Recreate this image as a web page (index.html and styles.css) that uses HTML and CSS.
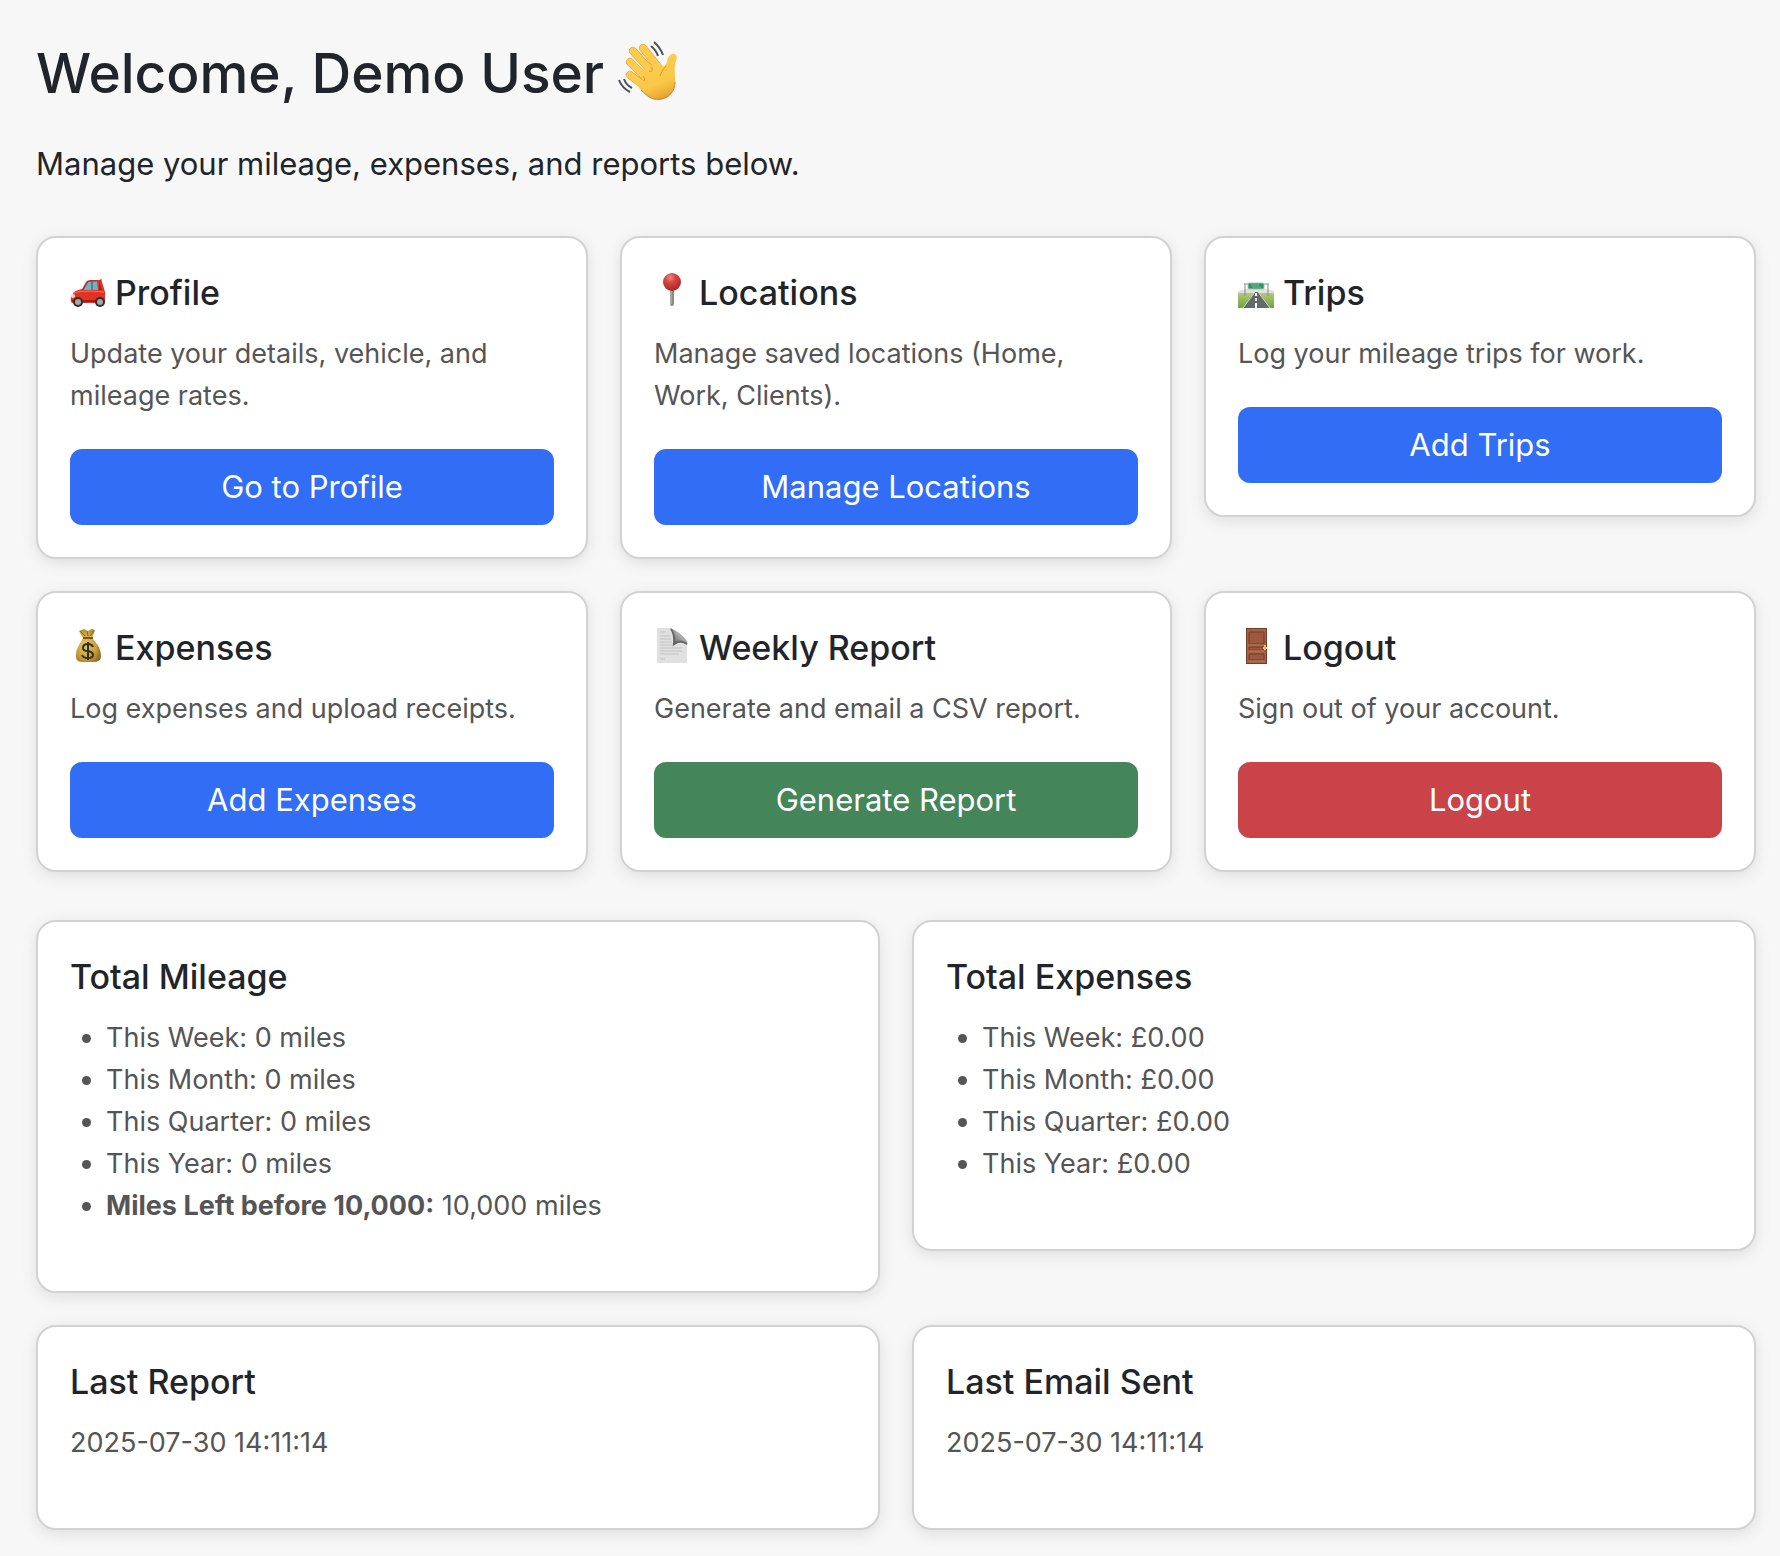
FILE: index.html
```html
<!DOCTYPE html>
<html lang="en">
<head>
  <meta charset="UTF-8">
  <meta name="viewport" content="width=device-width, initial-scale=1.0">
  <title>Dashboard</title>
  <link rel="stylesheet" href="styles.css">
</head>
<body>
  <main class="container">
    <h1>Welcome, Demo User
      <svg class="wave" viewBox="22 20 60 62" aria-hidden="true">
        <defs>
          <linearGradient id="skin" gradientUnits="userSpaceOnUse" x1="40" y1="25" x2="62" y2="80">
            <stop offset="0" stop-color="#ffd35a"/>
            <stop offset=".75" stop-color="#fac747"/>
            <stop offset="1" stop-color="#e6a632"/>
          </linearGradient>
        </defs>
        <g fill="none" stroke-linecap="round">
          <path d="M47 28L63 48M37 31L58 54M34 42L54 62M34 55L54 70" stroke="#dfa03a" stroke-width="8"/>
          <path d="M47 28L63 48M37 31L58 54M34 42L54 62M34 55L54 70" stroke="#fecb4d" stroke-width="7"/>
        </g>
        <path d="M48 48L53 52C56 53 57 49 55 46L61 42L66 46Q70 47 71 41C72 36 75 33 79 34Q82 36 80 41C78 47 79 51 79 58C80 70 74 79 63 80C55 80 50 75 45 70L38 62L47 61C49 59 46 56 44 54Z" fill="url(#skin)"/>
        <path d="M53 51Q57 53 56 47M48 61Q50 59 47 56M70 46Q66 49 64 56" fill="none" stroke="#d9952b" stroke-width="1"/>
        <path d="M45 70C52 77 57 80 63 79C73 79 79 71 79 62" fill="none" stroke="#cf8520" stroke-width="1"/>
        <path d="M55 26Q60 30 62 36M58 22Q64 27 67 35M28 59Q30 65 36 68M23 60Q26 68 34 72" fill="none" stroke="#4d5259" stroke-width="2"/>
      </svg>
    </h1>
    <p class="intro">Manage your mileage, expenses, and reports below.</p>

    <section class="grid actions">
      <div class="card">
        <h2>
          <svg class="icon" viewBox="0 0 36 36" aria-hidden="true">
            <path d="M2 22L5 18L12 16L16 9Q17 7 21 7H31L32 9L35 19V30H3Q0 30 1 24Z" fill="#df3326"/>
            <path d="M13 17L17 10Q18 8 21 8H27L28 17Z" fill="#68b4c8"/>
            <path d="M13 17L17 10Q18 8 21 8H27M22 8V17" fill="none" stroke="#8b3230" stroke-width="1"/>
            <path d="M29 8L32 17H29Z" fill="#a52322"/>
            <path d="M31 8V6" stroke="#8b3230"/>
            <path d="M3 20Q12 17 34 19" fill="none" stroke="#ff7668" stroke-width="1"/>
            <path d="M2 28H35" stroke="#97201b" stroke-width="2"/>
            <circle cx="3" cy="23" r="2" fill="#f9d8c3"/>
            <circle cx="8" cy="29" r="5" fill="#332d2c"/>
            <circle cx="30" cy="29" r="5" fill="#332d2c"/>
            <circle cx="8" cy="29" r="3" fill="#aaa5a3"/>
            <circle cx="30" cy="29" r="3" fill="#aaa5a3"/>
          </svg>
          Profile
        </h2>
        <p>Update your details, vehicle, and mileage rates.</p>
        <a href="#profile" class="btn btn-primary">Go to Profile</a>
      </div>

      <div class="card">
        <h2>
          <svg class="icon" viewBox="0 0 36 36" aria-hidden="true">
            <defs>
              <radialGradient id="pin" cx=".4" cy=".25" r=".8">
                <stop offset="0" stop-color="#f48b7d"/>
                <stop offset=".35" stop-color="#d84541"/>
                <stop offset="1" stop-color="#9f2426"/>
              </radialGradient>
            </defs>
            <path d="M18 15V31" stroke="#8f8883" stroke-width="4" stroke-linecap="round"/>
            <path d="M17 17V31" stroke="#c5c0bb" stroke-width="1"/>
            <circle cx="18" cy="9" r="9" fill="url(#pin)"/>
          </svg>
          Locations
        </h2>
        <p>Manage saved locations (Home, Work, Clients).</p>
        <a href="#locations" class="btn btn-primary">Manage Locations</a>
      </div>

      <div class="card">
        <h2>
          <svg class="icon" viewBox="0 0 36 36" aria-hidden="true">
            <defs>
              <linearGradient id="grass" x2="0" y2="1">
                <stop offset="0" stop-color="#b4c978"/>
                <stop offset="1" stop-color="#6fa540"/>
              </linearGradient>
            </defs>
            <path d="M0 18Q18 12 36 18V21H0Z" fill="#e3e0dc"/>
            <path d="M0 20H36V35H0Z" fill="url(#grass)"/>
            <path d="M17 19H20L32 35H5Z" fill="#66696c"/>
            <path d="M17 19L5 35M20 19L32 35" stroke="#d1d3ce" stroke-width="1"/>
            <path d="M18 20V23M18 25V28M18 30V35" stroke="#fff" stroke-width="2"/>
            <path d="M7 11V23M30 11V23M6 11H31" fill="none" stroke="#858d89" stroke-width="1"/>
            <rect x="10" y="10" width="16" height="6" rx="1" fill="#319062" stroke="#a8c5b6"/>
            <path d="M13 12H21M14 14H23" stroke="#75bc97" stroke-width="1"/>
          </svg>
          Trips
        </h2>
        <p>Log your mileage trips for work.</p>
        <a href="#trips" class="btn btn-primary">Add Trips</a>
      </div>

      <div class="card">
        <h2>
          <svg class="icon" viewBox="0 0 36 36" aria-hidden="true">
            <defs>
              <radialGradient id="bag" cx=".4" cy=".5" r=".7">
                <stop offset="0" stop-color="#e8c967"/>
                <stop offset=".6" stop-color="#c69b39"/>
                <stop offset="1" stop-color="#866021"/>
              </radialGradient>
            </defs>
            <path d="M9 3L14 1L18 3L22 1L25 2L22 10C27 16 31 20 31 28Q31 34 23 34H12Q5 34 6 27C6 20 10 16 13 10Z" fill="url(#bag)"/>
            <path d="M10 3L15 8M17 3L18 8M24 3L20 8" stroke="#8b6729"/>
            <path d="M13 10H23" stroke="#82531e" stroke-width="2"/>
            <path d="M23 19Q22 16 18 16Q13 16 13 20Q13 23 18 23Q23 24 23 27Q23 30 18 30Q13 30 12 27M18 14V32" fill="none" stroke="#322f20" stroke-width="2"/>
          </svg>
          Expenses
        </h2>
        <p>Log expenses and upload receipts.</p>
        <a href="#expenses" class="btn btn-primary">Add Expenses</a>
      </div>

      <div class="card">
        <h2>
          <svg class="icon" viewBox="0 0 36 36" aria-hidden="true">
            <defs>
              <linearGradient id="curl" x1="1" y1="0" x2="0" y2="1">
                <stop offset="0" stop-color="#f4f4f4"/>
                <stop offset=".5" stop-color="#a0a0a0"/>
                <stop offset="1" stop-color="#444"/>
              </linearGradient>
            </defs>
            <path d="M3 0H17L33 14V35H3Z" fill="#e0e0e0"/>
            <path d="M6 4H12M6 8H16M6 11H17M6 14H18M6 17H20M6 20H28M6 23H28M6 26H25M6 31H11" stroke="#c3c3c3" stroke-width="1"/>
            <path d="M16 0Q21 5 20 17Q27 12 33 17V13Q27 4 16 0Z" fill="url(#curl)"/>
            <path d="M17 1Q21 6 20 16Q26 11 33 16" fill="none" stroke="#666" stroke-width="2"/>
          </svg>
          Weekly Report
        </h2>
        <p>Generate and email a CSV report.</p>
        <button type="button" class="btn btn-success">Generate Report</button>
      </div>

      <div class="card">
        <h2>
          <svg class="icon" viewBox="0 0 36 36" aria-hidden="true">
            <path d="M8 0H29V36H8Z" fill="#70402e"/>
            <path d="M9 1H28V35H9Z" fill="#a76043"/>
            <path d="M11 4H26V16H11ZM11 19H26V22H11ZM11 26H26V32H11Z" fill="#9d583d" stroke="#6f3d2b" stroke-width="1"/>
            <path d="M11 17H26M11 23H26M11 33H26" stroke="#c07c5b" stroke-width="1"/>
            <path d="M27 17V22M25 20H29" stroke="#e5be54" stroke-width="2"/>
          </svg>
          Logout
        </h2>
        <p>Sign out of your account.</p>
        <a href="#logout" class="btn btn-danger">Logout</a>
      </div>
    </section>

    <section class="grid stats">
      <div class="card">
        <h2>Total Mileage</h2>
        <ul>
          <li>This Week: 0 miles</li>
          <li>This Month: 0 miles</li>
          <li>This Quarter: 0 miles</li>
          <li>This Year: 0 miles</li>
          <li><strong>Miles Left before 10,000:</strong> 10,000 miles</li>
        </ul>
      </div>

      <div class="card">
        <h2>Total Expenses</h2>
        <ul>
          <li>This Week: £0.00</li>
          <li>This Month: £0.00</li>
          <li>This Quarter: £0.00</li>
          <li>This Year: £0.00</li>
        </ul>
      </div>

      <div class="card">
        <h2>Last Report</h2>
        <p>2025-07-30 14:11:14</p>
      </div>

      <div class="card">
        <h2>Last Email Sent</h2>
        <p>2025-07-30 14:11:14</p>
      </div>
    </section>
  </main>
</body>
</html>
```

FILE: styles.css
```css
* {
  margin: 0;
  padding: 0;
  box-sizing: border-box;
}

body {
  background-color: #f7f7f7;
  color: #212529;
  font-family: Inter, "Liberation Sans", sans-serif;
  font-size: 31px;
  line-height: 48px;
}

.container {
  padding: 36px 24px 24px 36px;
}

h1 {
  display: flex;
  align-items: center;
  gap: 14px;
  margin-bottom: 30px;
  font-size: 55px;
  font-weight: 500;
  line-height: 74px;
}

.wave {
  width: 60px;
  height: 62px;
  margin-bottom: 4px;
}

.intro {
  margin-bottom: 48px;
}

.grid {
  display: grid;
  gap: 32px;
  align-items: start;
}

.actions {
  grid-template-columns: repeat(3, 1fr);
  margin-bottom: 48px;
}

.stats {
  grid-template-columns: repeat(2, 1fr);
}

.card {
  padding: 32px;
  background-color: #fff;
  border: 2px solid #d2d2d3;
  border-radius: 20px;
  box-shadow: 0 4px 16px rgba(0, 0, 0, 0.1);
}

.card h2 {
  display: flex;
  align-items: center;
  gap: 9px;
  margin-bottom: 17px;
  font-size: 34px;
  font-weight: 500;
  line-height: 46px;
}

.icon {
  width: 36px;
  height: 36px;
  margin-bottom: 4px;
}

.card p,
.card ul {
  margin-bottom: 32px;
  color: #555;
  font-size: 27px;
  line-height: 42px;
}

.card ul {
  padding-left: 36px;
}

.btn {
  display: block;
  width: 100%;
  padding: 14px 24px;
  border: none;
  border-radius: 12px;
  color: #fff;
  font-family: inherit;
  font-size: 31px;
  line-height: 48px;
  text-align: center;
  text-decoration: none;
  cursor: pointer;
}

.btn-primary {
  background-color: #316df5;
}

.btn-success {
  background-color: #44855a;
}

.btn-danger {
  background-color: #c94349;
}
```
